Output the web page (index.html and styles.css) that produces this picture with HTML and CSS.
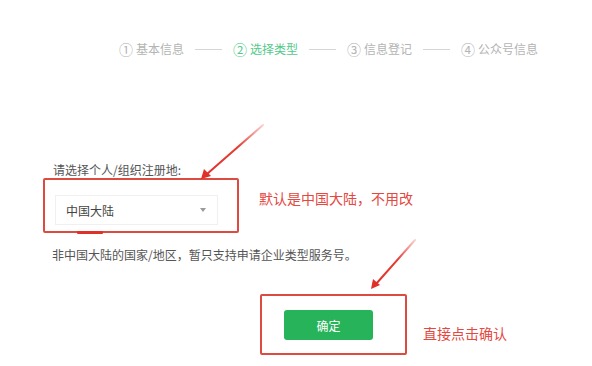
FILE: index.html
```html
<!DOCTYPE html>
<html lang="zh">
<head>
<meta charset="utf-8">
<link rel="stylesheet" href="styles.css">
</head>
<body>
<div class="page">
  <div class="steps">
    <span class="step"><span class="num">①</span>基本信息</span>
    <span class="dash"></span>
    <span class="step active"><span class="num">②</span>选择类型</span>
    <span class="dash"></span>
    <span class="step"><span class="num">③</span>信息登记</span>
    <span class="dash"></span>
    <span class="step"><span class="num">④</span>公众号信息</span>
  </div>

  <div class="form">
    <div class="label">请选择个人/组织注册地:</div>
    <div class="row">
      <div class="mark-box select-box">
        <div class="select">
          <span>中国大陆</span>
          <span class="caret"></span>
        </div>
        <span class="underline"></span>
      </div>
      <div class="note note-top">默认是中国大陆，不用改</div>
    </div>
    <div class="hint">非中国大陆的国家/地区，暂只支持申请企业类型服务号。</div>
    <div class="row btn-row">
      <div class="mark-box btn-box">
        <button class="btn">确定</button>
      </div>
      <div class="note note-bottom">直接点击确认</div>
    </div>
  </div>

  <svg class="arrows" width="592" height="366" viewBox="0 0 592 366">
    <defs>
      <linearGradient id="g1" x1="263" y1="125" x2="202" y2="178" gradientUnits="userSpaceOnUse">
        <stop offset="0" stop-color="#e84a40" stop-opacity="0.25"/>
        <stop offset="0.4" stop-color="#e53e35"/>
        <stop offset="1" stop-color="#e0302a"/>
      </linearGradient>
      <linearGradient id="g2" x1="415" y1="240" x2="372" y2="288" gradientUnits="userSpaceOnUse">
        <stop offset="0" stop-color="#e84a40" stop-opacity="0.25"/>
        <stop offset="0.4" stop-color="#e53e35"/>
        <stop offset="1" stop-color="#e0302a"/>
      </linearGradient>
    </defs>
    <line x1="263" y1="125" x2="207" y2="174" stroke="url(#g1)" stroke-width="2" stroke-linecap="round"/>
    <polygon points="201,179 204,169 211,176" fill="#e0302a"/>
    <line x1="415" y1="240" x2="376" y2="284" stroke="url(#g2)" stroke-width="2" stroke-linecap="round"/>
    <polygon points="371,289 373,279 380,285" fill="#e0302a"/>
  </svg>
</div>
</body>
</html>
```

FILE: styles.css
```css
* { box-sizing: border-box; }

html, body {
  margin: 0;
  padding: 0;
  background: #ffffff;
}

body {
  font-family: "Noto Sans CJK SC", "Noto Sans", sans-serif;
  color: #555555;
}

.page {
  position: relative;
  width: 592px;
  height: 366px;
  overflow: hidden;
}

.steps {
  display: flex;
  align-items: center;
  padding: 40px 0 0 119px;
  height: 58px;
  font-size: 12px;
  line-height: 18px;
  color: #b4b4b4;
  gap: 11px;
}

.step {
  display: flex;
  align-items: center;
  white-space: nowrap;
}

.step .num {
  font-size: 14px;
  margin-right: 3px;
}

.step.active {
  color: #52c98a;
}

.dash {
  width: 27px;
  height: 1px;
  background: #d6d6d6;
}

.form {
  padding-top: 104px;
}

.label {
  margin-left: 53px;
  font-size: 12px;
  line-height: 16px;
  color: #555555;
}

.row {
  display: flex;
}

.mark-box {
  position: relative;
  border: 2px solid #dc4a40;
  border-radius: 2px;
}

.select-box {
  margin-left: 43px;
  width: 196px;
  height: 55px;
  padding: 15px 0 0 10px;
}

.select {
  width: 163px;
  height: 30px;
  border: 1px solid #f0f0f0;
  display: flex;
  align-items: center;
  justify-content: space-between;
  padding: 0 11px 0 10px;
  font-size: 12px;
  color: #444444;
}

.caret {
  width: 0;
  height: 0;
  border-left: 3px solid transparent;
  border-right: 3px solid transparent;
  border-top: 4px solid #9a9a9a;
}

.underline {
  position: absolute;
  left: 32px;
  bottom: -3px;
  width: 26px;
  height: 3px;
  background: #e0302a;
  border-radius: 1px;
}

.note {
  font-size: 14px;
  line-height: 18px;
  color: #e5483f;
  white-space: nowrap;
}

.note-top {
  margin: 11px 0 0 20px;
}

.hint {
  margin: 14px 0 0 52px;
  font-size: 12px;
  line-height: 16px;
  color: #555555;
}

.btn-row {
  margin-top: 31px;
}

.btn-box {
  margin-left: 260px;
  width: 147px;
  height: 61px;
  padding: 14px 0 0 22px;
}

.btn {
  width: 89px;
  height: 30px;
  border: none;
  border-radius: 3px;
  background: #27b35a;
  color: #ffffff;
  font-family: "Noto Sans CJK SC", "Noto Sans", sans-serif;
  font-size: 12px;
  padding: 0;
}

.note-bottom {
  margin: 30px 0 0 16px;
}

.arrows {
  position: absolute;
  left: 0;
  top: 0;
  pointer-events: none;
}
```
